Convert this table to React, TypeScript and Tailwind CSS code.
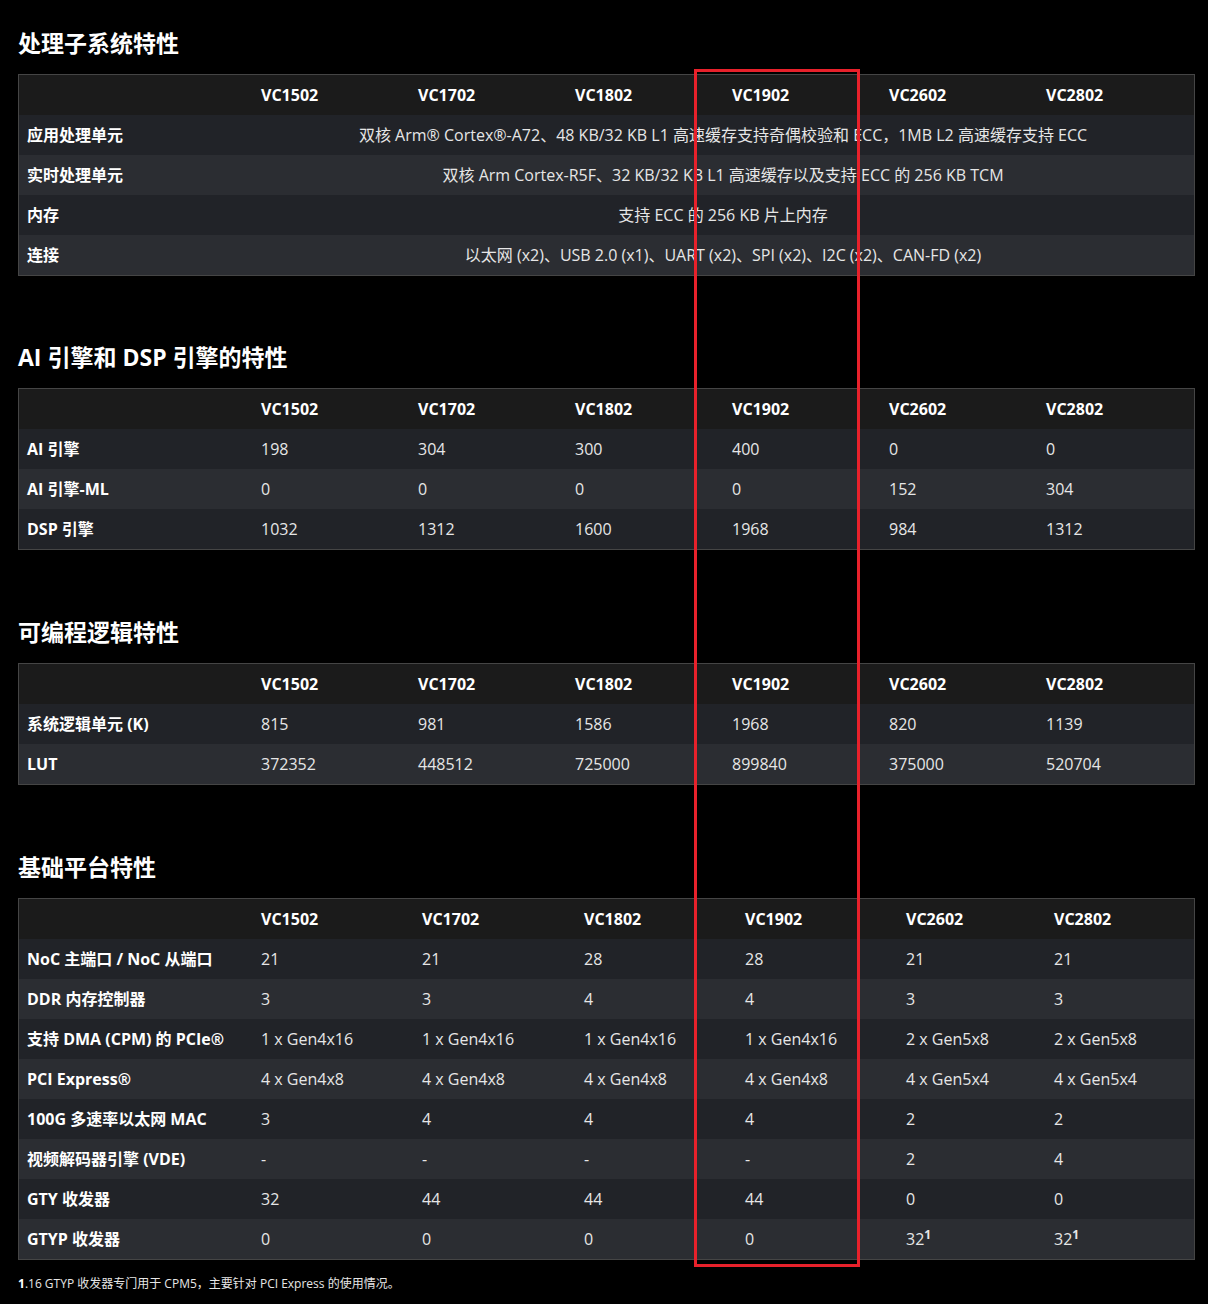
import React from 'react'

//column headers shared by all tables
const models = ['VC1502', 'VC1702', 'VC1802', 'VC1902', 'VC2602', 'VC2802']

type Row = {
  label: string
  values?: React.ReactNode[]
  merged?: string
}

type TableProps = {
  rows: Row[]
  cols: string // grid template class
}

//footnote marker
const Sup = () => <span className="relative -top-[6px] text-[12px] font-bold">1</span>

//spec table
function SpecTable({ rows, cols }: TableProps) {
  return (
    <div className="border border-[#454545] bg-[#1b1b1b]">
      <div className={`grid ${cols} h-10 items-center bg-[#1b1b1b]`}>
        <div />
        {models.map((m) => (
          <div key={m} className="px-[9px] font-bold text-white">
            {m}
          </div>
        ))}
      </div>
      {rows.map((row, i) => (
        <div
          key={row.label}
          className={`grid ${cols} h-10 items-center ${i % 2 === 0 ? 'bg-[#212328]' : 'bg-[#2b2d32]'}`}
        >
          <div className="px-2 font-bold text-white whitespace-nowrap">{row.label}</div>
          {row.merged ? (
            <div className="col-span-6 text-center text-[#e6e6e6] whitespace-nowrap">{row.merged}</div>
          ) : (
            row.values!.map((v, j) => (
              <div key={j} className="px-[9px] text-[#e6e6e6] whitespace-nowrap">
                {v}
              </div>
            ))
          )}
        </div>
      ))}
    </div>
  )
}

const Heading = ({ children }: { children: React.ReactNode }) => (
  <h2 className="text-[23px] leading-8 font-bold text-white mb-[15px]">{children}</h2>
)

const evenCols = 'grid-cols-[233px_repeat(6,157px)]'
const baseCols = 'grid-cols-[233px_161px_162px_161px_161px_148px_149px]'

function App() {
  return (
    <div
      className="relative min-h-[1304px] bg-black text-white text-[16px] pl-[18px] pr-[13px] pt-[27px] pb-4"
      style={{ fontFamily: '"Open Sans", "Noto Sans CJK SC", sans-serif' }}
    >
      <Heading>处理子系统特性</Heading>
      <SpecTable
        cols={evenCols}
        rows={[
          { label: '应用处理单元', merged: '双核 Arm® Cortex®-A72、48 KB/32 KB L1 高速缓存支持奇偶校验和 ECC，1MB L2 高速缓存支持 ECC' },
          { label: '实时处理单元', merged: '双核 Arm Cortex-R5F、32 KB/32 KB L1 高速缓存以及支持 ECC 的 256 KB TCM' },
          { label: '内存', merged: '支持 ECC 的 256 KB 片上内存' },
          { label: '连接', merged: '以太网 (x2)、USB 2.0 (x1)、UART (x2)、SPI (x2)、I2C (x2)、CAN-FD (x2)' },
        ]}
      />

      <div className="mt-[65px]">
        <Heading>AI 引擎和 DSP 引擎的特性</Heading>
        <SpecTable
          cols={evenCols}
          rows={[
            { label: 'AI 引擎', values: ['198', '304', '300', '400', '0', '0'] },
            { label: 'AI 引擎-ML', values: ['0', '0', '0', '0', '152', '304'] },
            { label: 'DSP 引擎', values: ['1032', '1312', '1600', '1968', '984', '1312'] },
          ]}
        />
      </div>

      <div className="mt-[66px]">
        <Heading>可编程逻辑特性</Heading>
        <SpecTable
          cols={evenCols}
          rows={[
            { label: '系统逻辑单元 (K)', values: ['815', '981', '1586', '1968', '820', '1139'] },
            { label: 'LUT', values: ['372352', '448512', '725000', '899840', '375000', '520704'] },
          ]}
        />
      </div>

      <div className="mt-[66px]">
        <Heading>基础平台特性</Heading>
        <SpecTable
          cols={baseCols}
          rows={[
            { label: 'NoC 主端口 / NoC 从端口', values: ['21', '21', '28', '28', '21', '21'] },
            { label: 'DDR 内存控制器', values: ['3', '3', '4', '4', '3', '3'] },
            { label: '支持 DMA (CPM) 的 PCIe®', values: ['1 x Gen4x16', '1 x Gen4x16', '1 x Gen4x16', '1 x Gen4x16', '2 x Gen5x8', '2 x Gen5x8'] },
            { label: 'PCI Express®', values: ['4 x Gen4x8', '4 x Gen4x8', '4 x Gen4x8', '4 x Gen4x8', '4 x Gen5x4', '4 x Gen5x4'] },
            { label: '100G 多速率以太网 MAC', values: ['3', '4', '4', '4', '2', '2'] },
            { label: '视频解码器引擎 (VDE)', values: ['-', '-', '-', '-', '2', '4'] },
            { label: 'GTY 收发器', values: ['32', '44', '44', '44', '0', '0'] },
            {
              label: 'GTYP 收发器',
              values: [
                '0',
                '0',
                '0',
                '0',
                <>
                  32
                  <Sup />
                </>,
                <>
                  32
                  <Sup />
                </>,
              ],
            },
          ]}
        />
      </div>

      <p className="mt-[15px] text-[12px] text-[#e6e6e6]">
        <span className="font-bold text-white">1</span>.16 GTYP 收发器专门用于 CPM5，主要针对 PCI Express 的使用情况。
      </p>

      {/* highlight box around VC1902 */}
      <div className="absolute left-[694px] top-[69px] w-[166px] h-[1198px] border-[3px] border-[#e8212b] pointer-events-none" />
    </div>
  )
}

export default App
